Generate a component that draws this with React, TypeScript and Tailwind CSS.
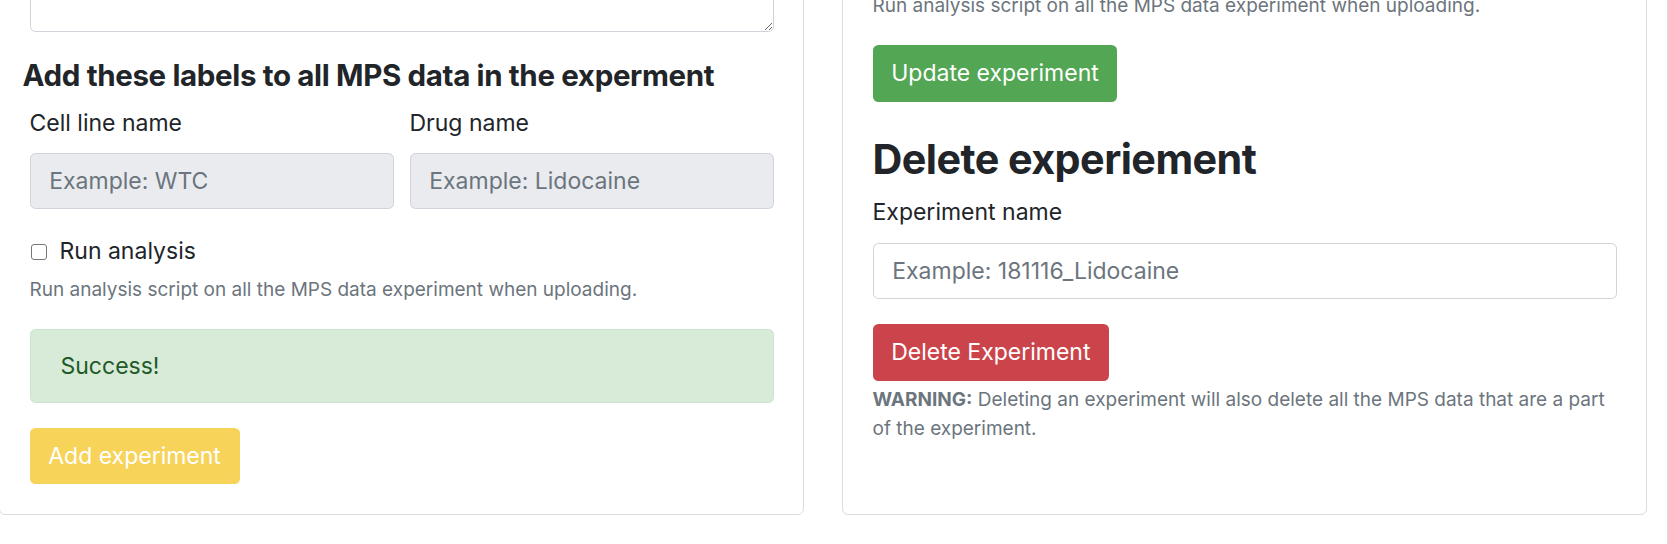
export default function App() {
  return (
    <div className="h-[544px] w-[1668px] overflow-hidden border-r border-[#dcdcdc] bg-white text-[#212529] [font-family:Inter,'Noto_Sans',sans-serif]">
      <div className="-ml-px mr-[20px] -mt-[100px] flex gap-[38px]">
        {/* upload form */}
        <div className="flex-1 rounded-[6px] border border-[#dcdcdc] px-[29.5px] pt-[29.5px] pb-[29.5px]">
          <textarea className="block h-[101px] w-full rounded-[5.5px] border border-[#ced4da]" />
          <h5 className="mt-[26px] -ml-[7px] text-[29.5px] leading-[35.4px] font-bold tracking-[-0.35px]">
            Add these labels to all MPS data in the experment
          </h5>
          <div className="mt-[12.8px] grid grid-cols-2 gap-[16px]">
            <div>
              <label className="block text-[23px] leading-[35.4px]">Cell line name</label>
              <input
                disabled
                placeholder="Example: WTC"
                className="mt-[12px] block h-[56px] w-full rounded-[5.5px] border border-[#ced4da] bg-[#e9ebef] px-[18.7px] text-[23px] placeholder:text-[#6c757d]"
              />
            </div>
            <div>
              <label className="block text-[23px] leading-[35.4px]">Drug name</label>
              <input
                disabled
                placeholder="Example: Lidocaine"
                className="mt-[12px] block h-[56px] w-full rounded-[5.5px] border border-[#ced4da] bg-[#e9ebef] px-[18.7px] text-[23px] placeholder:text-[#6c757d]"
              />
            </div>
          </div>
          <label className="mt-[25.3px] flex items-center text-[23px] leading-[35.4px]">
            <input
              type="checkbox"
              className="ml-px h-[16px] w-[16px] appearance-none rounded-[3px] border border-[#767676] bg-white"
            />
            <span className="ml-[13px]">Run analysis</span>
          </label>
          <p className="mt-[5.4px] text-[19px] leading-[29.3px] text-[#6c757d]">
            Run analysis script on all the MPS data experiment when uploading.
          </p>
          <div className="mt-[24.5px] flex h-[74px] items-center rounded-[5.5px] border border-[#c9e4cd] bg-[#d8ebd9] px-[30px] text-[23px] text-[#1f5a28]">
            Success!
          </div>
          <button className="mt-[25px] h-[56px] rounded-[5.5px] bg-[#f7d35a] px-[18.7px] text-[23px] text-white">
            Add experiment
          </button>
        </div>

        {/* update / delete */}
        <div className="flex-1 rounded-[6px] border border-[#dcdcdc] px-[29.5px] pt-[90.25px]">
          <p className="text-[19px] leading-[29.3px] text-[#6c757d]">
            Run analysis script on all the MPS data experiment when uploading.
          </p>
          <button className="mt-[24.5px] h-[56.5px] rounded-[5.5px] bg-[#53a654] px-[18.7px] text-[23px] text-white">
            Update experiment
          </button>
          <h3 className="mt-[33px] text-[41.3px] leading-[49.6px] font-bold tracking-[-0.55px]">
            Delete experiement
          </h3>
          <label className="mt-[11.3px] block text-[23px] leading-[35.4px]">Experiment name</label>
          <input
            placeholder="Example: 181116_Lidocaine"
            className="mt-[12.5px] block h-[56px] w-full rounded-[5.5px] border border-[#ced4da] bg-white px-[18.7px] text-[23px] placeholder:text-[#6c757d]"
          />
          <button className="mt-[24.7px] h-[56.5px] rounded-[5.5px] bg-[#cc444b] px-[18.7px] text-[23px] text-white">
            Delete Experiment
          </button>
          <p className="mt-[4.5px] text-[19px] leading-[29.3px] text-[#6c757d]">
            <strong className="font-bold">WARNING:</strong> Deleting an experiment will also delete all the MPS data that are a part of the experiment.
          </p>
        </div>
      </div>
    </div>
  );
}
